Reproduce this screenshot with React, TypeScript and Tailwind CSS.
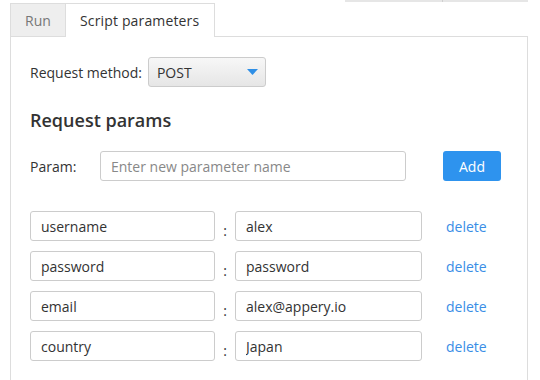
import React from 'react'

const params = [
  { key: 'username', value: 'alex' },
  { key: 'password', value: 'password' },
  { key: 'email', value: 'alex@appery.io' },
  { key: 'country', value: 'Japan' },
]

const inputCls =
  'h-[30px] rounded-[3px] border border-[#cccccc] bg-white px-[10px] text-[14px] text-[#333333] outline-none'

const App: React.FC = () => {
  return (
    <div
      className="w-[540px] h-[380px] overflow-hidden bg-white pl-[10px] text-[14px] text-[#333333]"
      style={{ fontFamily: '"Open Sans", "Liberation Sans", sans-serif' }}
    >
      <div className="flex h-[36px] w-[518px]">
        <div className="mt-[3px] flex h-[33px] w-[55px] items-center justify-center border-l border-t border-[#dddddd] bg-[#eeeeee] text-[#777777]">
          Run
        </div>
        <div className="relative z-10 mt-[3px] flex h-[34px] w-[150px] items-center border-x border-t border-[#dddddd] bg-white pl-[14px] tracking-[0.15px]">
          Script parameters
        </div>
        <div className="ml-auto flex h-[2px] w-[183px] self-start bg-[#e6e6e6]">
          <div className="ml-[97px] h-[2px] w-px bg-[#cfcfcf]" />
        </div>
      </div>
      <div className="h-[400px] w-[518px] border-l border-r border-t border-[#dddddd] pl-[19px] pt-[20px]">
        <div className="flex items-center">
          <span>Request method:</span>
          <div className="ml-[6px] flex h-[30px] w-[118px] items-center justify-between rounded-[3px] border border-[#cccccc] bg-gradient-to-b from-[#f7f7f7] to-[#e6e6e6] pl-[8px] pr-[7px]">
            <span>POST</span>
            <svg width="11" height="6" viewBox="0 0 11 6">
              <path d="M0 0 L11 0 L5.5 6 Z" fill="#2f8fe6" />
            </svg>
          </div>
        </div>
        <h2 className="mt-[21px] text-[18px] font-semibold leading-[24px]">Request params</h2>
        <div className="mt-[19px] flex items-center">
          <span className="w-[70px]">Param:</span>
          <input className={`${inputCls} w-[306px] placeholder:text-[#888888]`} placeholder="Enter new parameter name" />
          <button className="ml-[37px] h-[30px] w-[58px] rounded-[3px] bg-[#2e93ee] text-[14px] font-medium text-white">
            Add
          </button>
        </div>
        <div className="mt-[30px] flex flex-col gap-[10px]">
          {params.map((p) => (
            <div key={p.key} className="flex items-center">
              <input className={`${inputCls} w-[185px]`} defaultValue={p.key} />
              <span className="w-[20px] pt-[8px] text-center">:</span>
              <input className={`${inputCls} w-[187px]`} defaultValue={p.value} />
              <a className="ml-[24px] text-[#3a8ee6]" href="#">
                delete
              </a>
            </div>
          ))}
        </div>
      </div>
    </div>
  )
}

export default App
